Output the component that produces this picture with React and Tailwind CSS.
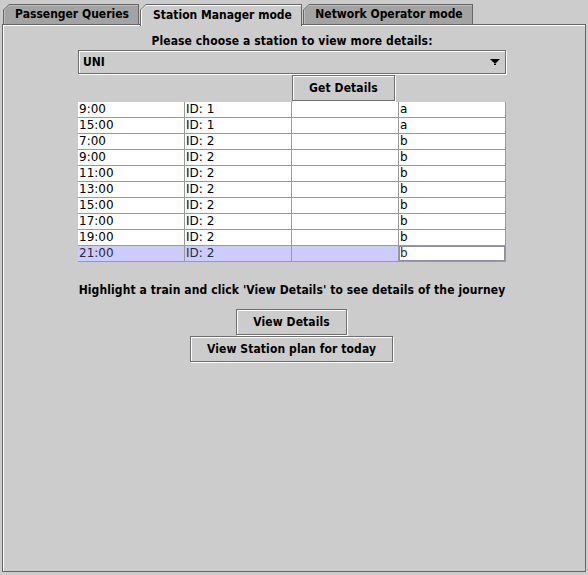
import React from "react";

const rows = [
  ["9:00", "ID: 1", "", "a"],
  ["15:00", "ID: 1", "", "a"],
  ["7:00", "ID: 2", "", "b"],
  ["9:00", "ID: 2", "", "b"],
  ["11:00", "ID: 2", "", "b"],
  ["13:00", "ID: 2", "", "b"],
  ["15:00", "ID: 2", "", "b"],
  ["17:00", "ID: 2", "", "b"],
  ["19:00", "ID: 2", "", "b"],
  ["21:00", "ID: 2", "", "b"],
];

function Tab({ label, selected, width }) {
  if (selected) {
    return (
      <div
        className="relative z-10 -mb-[2px] h-[22px] bg-[#666666] pt-[1px] pl-[1px] pr-[1px] [clip-path:polygon(6px_0,100%_0,100%_100%,0_100%,0_6px)]"
        style={{ width }}
      >
        <div className="h-full bg-white pt-[1px] pl-[1px] [clip-path:polygon(5px_0,100%_0,100%_100%,0_100%,0_5px)]">
          <div className="flex h-full items-start justify-center bg-[#cccccc] pt-[1px] pl-[2px] [clip-path:polygon(4px_0,100%_0,100%_100%,0_100%,0_4px)]">
            <span className="font-['DejaVu_Sans_Condensed','DejaVu_Sans',sans-serif] text-[12px] leading-[16px] font-bold font-stretch-condensed text-black">
              {label}
            </span>
          </div>
        </div>
      </div>
    );
  }
  return (
    <div
      className="h-[20px] bg-[#666666] pt-[1px] pl-[1px] pr-[1px] [clip-path:polygon(6px_0,100%_0,100%_100%,0_100%,0_6px)]"
      style={{ width }}
    >
      <div className="h-full bg-[#bdbdbd] pt-[1px] pl-[1px] [clip-path:polygon(5px_0,100%_0,100%_100%,0_100%,0_5px)]">
        <div className="flex h-full items-start justify-center bg-[#a3a3a3] pl-[1px] [clip-path:polygon(4px_0,100%_0,100%_100%,0_100%,0_4px)]">
          <span className="font-['DejaVu_Sans_Condensed','DejaVu_Sans',sans-serif] text-[12px] leading-[17px] font-bold font-stretch-condensed text-black">
            {label}
          </span>
        </div>
      </div>
    </div>
  );
}

function Button({ label, className }) {
  return (
    <div
      className={
        "flex h-[26px] items-center justify-center border border-[#6e6e6e] bg-[#cccccc] shadow-[inset_1px_1px_0_#ffffff,1px_1px_0_#ffffff] font-['DejaVu_Sans_Condensed','DejaVu_Sans',sans-serif] text-[12px] font-bold font-stretch-condensed tracking-[0.1px] text-black " +
        className
      }
    >
      {label}
    </div>
  );
}

export default function App() {
  return (
    <div className="h-[575px] w-[588px] overflow-hidden bg-[#cccccc]">
      <div className="flex h-[24px] items-end pl-[3px]">
        <Tab label="Passenger Queries" width={136} />
        <div className="w-[1px]" />
        <Tab label="Station Manager mode" selected width={162} />
        <div className="w-[1px]" />
        <Tab label="Network Operator mode" width={170} />
      </div>
      <div className="ml-[2px] h-[548px] w-[584px] border border-[#666666] shadow-[inset_1px_1px_0_#ffffff]">
        <div className="ml-[75px] flex w-[428px] flex-col">
          <div className="mt-[8px] h-[16px] text-center font-['DejaVu_Sans_Condensed','DejaVu_Sans',sans-serif] text-[12px] leading-[16px] font-bold font-stretch-condensed tracking-[0.1px] text-black">
            Please choose a station to view more details:
          </div>
          <div className="mt-[1px] flex h-[24px] items-center justify-between border border-[#6e6e6e] bg-[#cccccc] pr-[5px] pl-[4px] shadow-[inset_1px_1px_0_#ffffff,1px_1px_0_#ffffff]">
            <span className="font-['DejaVu_Sans_Condensed','DejaVu_Sans',sans-serif] text-[12px] font-bold font-stretch-condensed text-black">
              UNI
            </span>
            <svg width="10" height="6" viewBox="0 0 10 6">
              <polygon points="0,0 10,0 5,5" fill="#000000" />
              <rect x="4" y="5" width="2" height="1" fill="#000000" />
            </svg>
          </div>
          <Button label="Get Details" className="mt-[1px] ml-[214px] w-[103px]" />
          <div className="mt-[1px] flex flex-col bg-white">
            {rows.map((r, i) => {
              const sel = i === rows.length - 1;
              return (
                <div key={i} className="flex h-[16px]">
                  {r.map((c, j) => {
                    const focus = sel && j === 3;
                    const bg = focus
                      ? "bg-white shadow-[inset_0_0_0_1px_#8e8e9e]"
                      : sel
                      ? "bg-[#ccccff]"
                      : "bg-white";
                    return (
                      <div
                        key={j}
                        className={
                          "h-[16px] w-[107px] border-r border-b border-[#9a9a9a] pl-[1px] font-['DejaVu_Sans',sans-serif] text-[12px] leading-[15px] " +
                          (sel ? "text-[#2a2a3a] " : "text-black ") +
                          bg
                        }
                      >
                        {c}
                      </div>
                    );
                  })}
                </div>
              );
            })}
          </div>
          <div className="mt-[20px] h-[16px] text-center font-['DejaVu_Sans_Condensed','DejaVu_Sans',sans-serif] text-[12px] leading-[16px] font-bold font-stretch-condensed tracking-[0.1px] whitespace-nowrap text-black">
            Highlight a train and click 'View Details' to see details of the journey
          </div>
          <Button label="View Details" className="mt-[11px] ml-[158px] w-[111px]" />
          <Button label="View Station plan for today" className="mt-[1px] ml-[112px] w-[203px]" />
        </div>
      </div>
    </div>
  );
}
